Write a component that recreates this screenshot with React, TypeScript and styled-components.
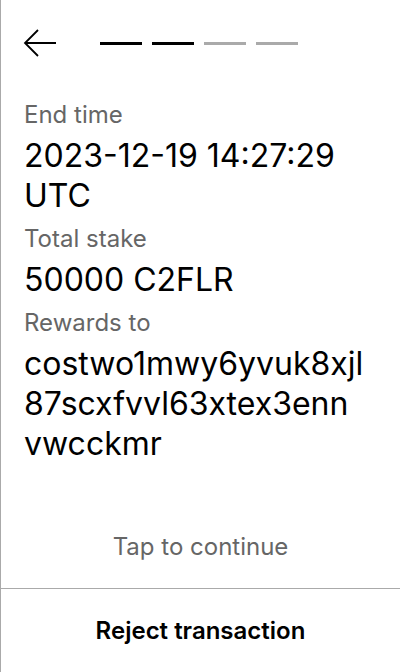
import React from "react";
import styled, { createGlobalStyle } from "styled-components";

const Global = createGlobalStyle`
  html, body { margin: 0; padding: 0; background: #fff; }
  body { font-family: Inter, "Noto Sans", sans-serif; }
  * { box-sizing: border-box; }
`;

const Screen = styled.div`
  width: 400px;
  height: 672px;
  border-left: 1px solid #aaaaaa;
  display: flex;
  flex-direction: column;
  background: #fff;
`;

const Header = styled.div`
  display: flex;
  align-items: center;
  height: 86px;
  padding: 0 0 0 22px;
  gap: 43px;
`;

const BackButton = styled.button`
  border: 0;
  background: none;
  padding: 0;
  width: 34px;
  height: 30px;
  display: flex;
  align-items: center;
  cursor: pointer;
`;

const Steps = styled.div`
  display: flex;
  gap: 10px;
`;

const Step = styled.div<{ $done: boolean }>`
  width: 42px;
  height: 3px;
  background: ${(p) => (p.$done ? "#000" : "#aaaaaa")};
`;

const Content = styled.div`
  flex: 1;
  padding: 6px 24px 0 23px;
  display: flex;
  flex-direction: column;
`;

const Label = styled.div`
  font-size: 24px;
  line-height: 30px;
  margin: 8px 0 6px;
  color: #666666;
`;

const Value = styled.div`
  font-size: 32px;
  line-height: 40px;
  color: #000;
`;

const AddressLine = styled.span`
  display: block;
  white-space: nowrap;
`;

const Hint = styled.div`
  text-align: center;
  font-size: 24px;
  line-height: 30px;
  color: #666666;
  padding-bottom: 26px;
`;

const Footer = styled.button`
  height: 84px;
  border: 0;
  border-top: 1px solid #aaaaaa;
  background: #fff;
  font-family: Inter, "Noto Sans", sans-serif;
  font-size: 24px;
  font-weight: 600;
  color: #000;
  cursor: pointer;
`;

const ADDRESS = "costwo1mwy6yvuk8xjl87scxfvvl63xtex3ennvwcckmr";
const CHUNK = 19;

function chunk(s: string, n: number): string[] {
  const out: string[] = [];
  for (let i = 0; i < s.length; i += n) out.push(s.slice(i, i + n));
  return out;
}

export default function App() {
  return (
    <>
      <Global />
      <Screen>
        <Header>
          <BackButton aria-label="Back">
            <svg width="34" height="30" viewBox="0 0 34 30" fill="none">
              <path d="M33 15H3" stroke="#000" strokeWidth="2" />
              <path d="M15 2L2 15L15 28" stroke="#000" strokeWidth="1.8" />
            </svg>
          </BackButton>
          <Steps>
            <Step $done />
            <Step $done />
            <Step $done={false} />
            <Step $done={false} />
          </Steps>
        </Header>
        <Content>
          <Label>End time</Label>
          <Value>2023-12-19 14:27:29 UTC</Value>
          <Label>Total stake</Label>
          <Value>50000 C2FLR</Value>
          <Label>Rewards to</Label>
          <Value>
            {chunk(ADDRESS, CHUNK).map((line) => (
              <AddressLine key={line}>{line}</AddressLine>
            ))}
          </Value>
        </Content>
        <Hint>Tap to continue</Hint>
        <Footer>Reject transaction</Footer>
      </Screen>
    </>
  );
}
